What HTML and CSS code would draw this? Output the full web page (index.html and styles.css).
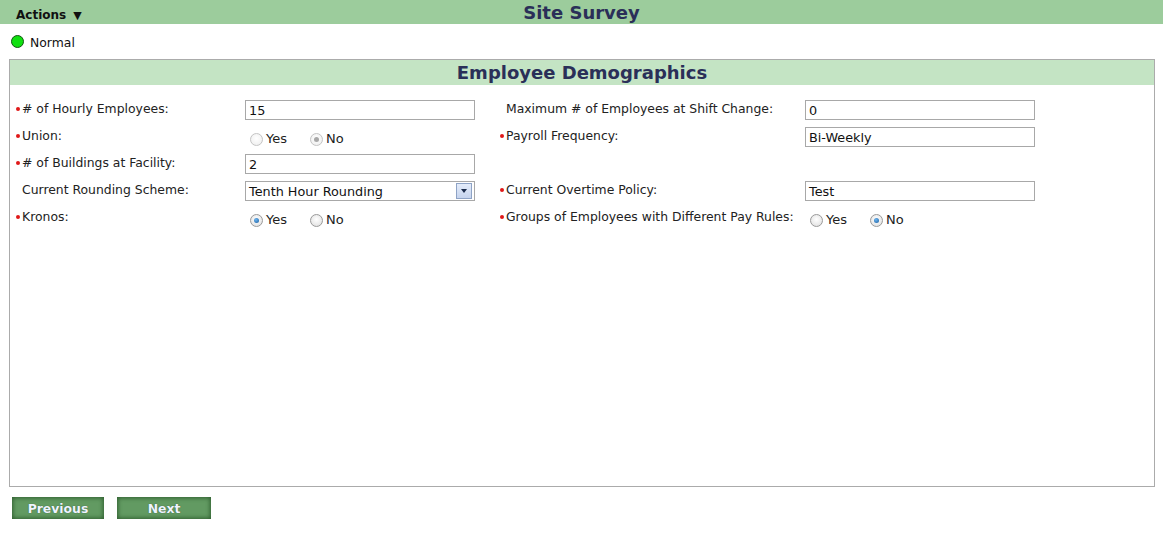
FILE: index.html
```html
<!DOCTYPE html>
<html>
<head>
<meta charset="utf-8">
<link rel="stylesheet" href="styles.css">
</head>
<body>
<div class="topbar">
  <div class="actions">Actions <span class="caret">&#9660;</span></div>
  <div class="title">Site Survey</div>
</div>
<div class="status"><span class="dot"></span><span>Normal</span></div>
<div class="panel">
  <div class="panel-head">Employee Demographics</div>
  <div class="form">
    <div class="lbl req"># of Hourly Employees:</div>
    <div class="fld"><div class="input">15</div></div>
    <div class="gap"></div>
    <div class="lbl">Maximum # of Employees at Shift Change:</div>
    <div class="fld"><div class="input">0</div></div>

    <div class="lbl req">Union:</div>
    <div class="fld radios"><span class="opt"><span class="radio disabled"></span>Yes</span><span class="opt"><span class="radio disabled checked"></span>No</span></div>
    <div class="gap"></div>
    <div class="lbl req">Payroll Frequency:</div>
    <div class="fld"><div class="input">Bi-Weekly</div></div>

    <div class="lbl req"># of Buildings at Facility:</div>
    <div class="fld"><div class="input">2</div></div>
    <div class="gap"></div>
    <div class="lbl"></div>
    <div class="fld"></div>

    <div class="lbl">Current Rounding Scheme:</div>
    <div class="fld"><div class="input select">Tenth Hour Rounding<span class="arrow"></span></div></div>
    <div class="gap"></div>
    <div class="lbl req">Current Overtime Policy:</div>
    <div class="fld"><div class="input">Test</div></div>

    <div class="lbl req">Kronos:</div>
    <div class="fld radios"><span class="opt"><span class="radio checked"></span>Yes</span><span class="opt"><span class="radio"></span>No</span></div>
    <div class="gap"></div>
    <div class="lbl req">Groups of Employees with Different Pay Rules:</div>
    <div class="fld radios"><span class="opt"><span class="radio"></span>Yes</span><span class="opt"><span class="radio checked"></span>No</span></div>
  </div>
</div>
<div class="buttons">
  <div class="btn prev">Previous</div>
  <div class="btn next">Next</div>
</div>
</body>
</html>
```

FILE: styles.css
```css
* { box-sizing: border-box; }
body {
  margin: 0;
  font-family: "DejaVu Sans", Verdana, sans-serif;
  font-size: 12px;
  color: #222;
  background: #fff;
}
.topbar {
  height: 24px;
  background: #9ccc9c;
  display: grid;
  grid-template-columns: 1fr auto 1fr;
  align-items: center;
}
.actions {
  font-weight: bold;
  font-size: 12px;
  color: #111;
  padding-left: 16px;
  padding-top: 6px;
}
.caret { font-size: 11px; margin-left: 3px; }
.title {
  font-weight: bold;
  font-size: 18px;
  color: #2a2f58;
  padding-bottom: 0px;
}
.status {
  height: 35px;
  display: flex;
  align-items: flex-start;
  padding: 11px 0 0 11px;
  gap: 6px;
  font-size: 12.4px;
  color: #111;
}
.dot {
  width: 13px;
  height: 13px;
  border-radius: 50%;
  background: #10e010;
  border: 1px solid #115511;
}
.panel {
  margin: 0 8px 0 9px;
  height: 428px;
  border: 1px solid #ababab;
}
.panel-head {
  height: 25px;
  background: #c4e4c4;
  text-align: center;
  font-weight: bold;
  font-size: 18px;
  color: #2a2f58;
  line-height: 26px;
}
.form {
  display: grid;
  grid-template-columns: 229px 230px 25px 305px 230px;
  grid-auto-rows: 27px;
  padding: 15px 0 0 6px;
  font-size: 12.4px;
}
.lbl {
  padding: 2px 0 0 6px;
  line-height: 14px;
  white-space: nowrap;
  position: relative;
}
.lbl.req::before {
  content: "";
  position: absolute;
  left: 0;
  top: 7px;
  width: 4px;
  height: 4px;
  border-radius: 50%;
  background: #e01818;
}
.input {
  height: 20px;
  border: 1px solid #a8a8a8;
  padding: 1px 0 0 3px;
  line-height: 18px;
  font-size: 12.8px;
  color: #111;
  position: relative;
}
.select .arrow {
  position: absolute;
  right: 2px;
  top: 1px;
  width: 16px;
  height: 16px;
  border: 1px solid #8ea3c6;
  background: linear-gradient(#e4ecfa, #c6d4ee);
}
.select .arrow::after {
  content: "";
  position: absolute;
  left: 4px;
  top: 5px;
  border-left: 3.5px solid transparent;
  border-right: 3.5px solid transparent;
  border-top: 4px solid #1a2a4a;
}
.radios {
  display: flex;
  align-items: flex-start;
  padding: 5px 0 0 5px;
}
.opt {
  display: inline-flex;
  align-items: center;
  width: 60px;
  line-height: 14px;
  font-size: 13px;
}
.radio {
  width: 13px;
  height: 13px;
  border-radius: 50%;
  border: 1px solid #9a9a9a;
  background: radial-gradient(circle at 50% 40%, #ffffff, #dcdcdc);
  margin-right: 3px;
  position: relative;
}
.radio.disabled {
  border-color: #c4c4c4;
  background: radial-gradient(circle at 50% 40%, #ffffff, #ececec);
}
.radio.checked::after {
  content: "";
  position: absolute;
  left: 3px;
  top: 3px;
  width: 5px;
  height: 5px;
  border-radius: 50%;
  background: radial-gradient(circle at 40% 35%, #6ab4f0, #1d5e9e);
}
.radio.disabled.checked::after {
  background: #a8a8a8;
}
.buttons {
  display: flex;
  gap: 13px;
  padding: 10px 0 0 12px;
}
.btn {
  height: 22px;
  background: #629a62;
  box-shadow: inset 0 0 4px 1px #2f5f2f;
  color: #eef4ff;
  font-weight: bold;
  font-size: 12.4px;
  text-align: center;
  line-height: 23px;
  text-shadow: 0 0 1px #2d4d2d;
}
.prev { width: 92px; }
.next { width: 94px; }
```
